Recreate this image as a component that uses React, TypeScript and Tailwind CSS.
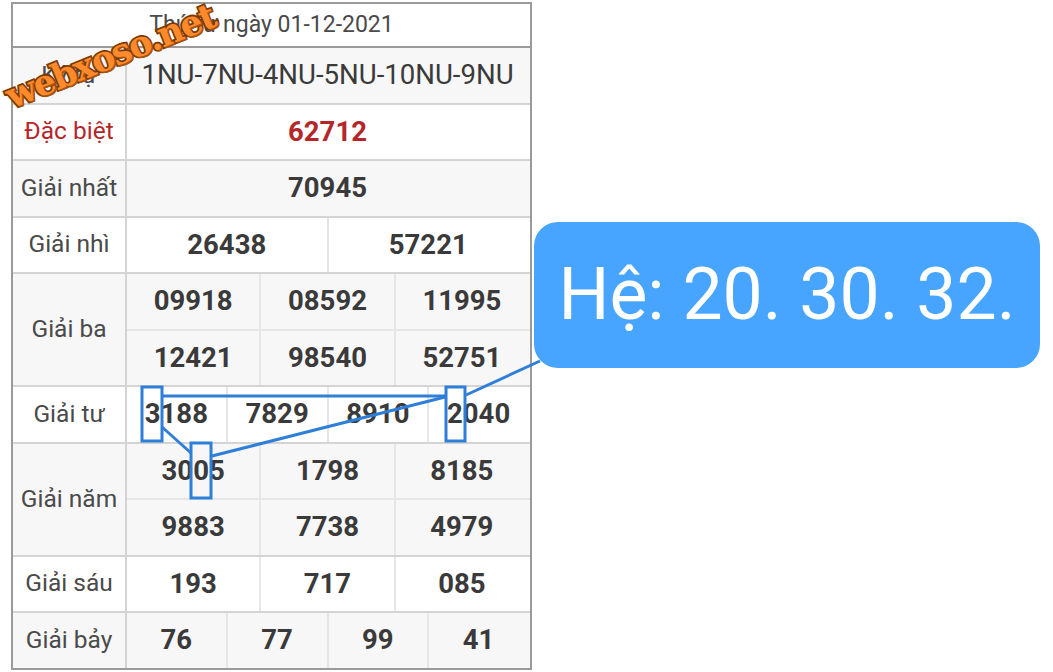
const font = "font-['Roboto',sans-serif]"

function Cells({ values, bold = true }: { values: string[]; bold?: boolean }) {
  return (
    <div className="flex flex-1 h-full pr-[2px]">
      {values.map((v, i) => (
        <div
          key={i}
          className={`flex-1 flex items-center justify-center pb-[1px] ${i > 0 ? "border-l-2 border-[#e6e6e6]" : ""} ${bold ? "font-bold text-[27.5px]" : "text-[27.6px]"}`}
        >
          {v}
        </div>
      ))}
    </div>
  )
}

function Label({ text, red }: { text: string; red?: boolean }) {
  return (
    <div className={`w-[114px] shrink-0 self-stretch flex items-center justify-center text-[24.5px] border-r-2 border-[#d4d4d4] ${red ? "text-[#b5262b]" : "text-[#4a4a4a]"}`}>
      {text}
    </div>
  )
}

function Row({ label, values, gray, red, bold }: { label: string; values: string[]; gray?: boolean; red?: boolean; bold?: boolean }) {
  return (
    <div className={`flex h-[56.5px] last:h-[54.5px] items-center border-b-2 border-[#d4d4d4] last:border-b-0 ${gray ? "bg-[#f7f7f7]" : "bg-white"}`}>
      <Label text={label} red={red} />
      <Cells values={values} bold={bold} />
    </div>
  )
}

function DoubleRow({ label, top, bottom, gray }: { label: string; top: string[]; bottom: string[]; gray?: boolean }) {
  return (
    <div className={`flex h-[113px] border-b-2 border-[#d4d4d4] ${gray ? "bg-[#f7f7f7]" : "bg-white"}`}>
      <Label text={label} />
      <div className="flex-1 flex flex-col">
        <div className="flex-1 border-b-2 border-[#e6e6e6]">
          <Cells values={top} />
        </div>
        <div className="flex-1">
          <Cells values={bottom} />
        </div>
      </div>
    </div>
  )
}

export default function App() {
  return (
    <div className={`${font} relative w-[1053px] h-[672px] bg-white overflow-hidden flex items-start text-[#3a3a3a]`}>
      <div className="ml-[11px] mt-[2px] w-[521px] border-2 border-[#9a9a9a]">
        <div className="h-[44px] flex items-center justify-center text-[23px] text-[#4a4a4a] border-b-2 border-[#9a9a9a]">
          Thứ tư ngày 01-12-2021
        </div>
        <Row label="Ký tự" values={["1NU-7NU-4NU-5NU-10NU-9NU"]} gray bold={false} />
        <div className="flex h-[56.5px] items-center border-b-2 border-[#d4d4d4] bg-white">
          <Label text="Đặc biệt" red />
          <div className="flex-1 pr-[2px] text-center font-bold text-[27.5px] text-[#b5262b]">62712</div>
        </div>
        <Row label="Giải nhất" values={["70945"]} gray />
        <Row label="Giải nhì" values={["26438", "57221"]} />
        <DoubleRow label="Giải ba" top={["09918", "08592", "11995"]} bottom={["12421", "98540", "52751"]} gray />
        <Row label="Giải tư" values={["3188", "7829", "8910", "2040"]} />
        <DoubleRow label="Giải năm" top={["3005", "1798", "8185"]} bottom={["9883", "7738", "4979"]} gray />
        <Row label="Giải sáu" values={["193", "717", "085"]} />
        <Row label="Giải bảy" values={["76", "77", "99", "41"]} gray />
      </div>

      {/* annotation lines over the table */}
      <svg className="absolute inset-0" width="1053" height="672" fill="none" stroke="#2f7fd9" strokeWidth="3">
        <rect x="142" y="387" width="20" height="54" />
        <rect x="191" y="443" width="20" height="55" />
        <rect x="446" y="387" width="19" height="54" />
        <path d="M163 396H445" />
        <path d="M212 456L445 397" />
        <path d="M162 427L191 453" />
        <path d="M466 395L540 361" />
      </svg>

      <div className="relative ml-[2px] mt-[222px] w-[506px] h-[146px] rounded-[24px] bg-[#47a4ff] text-white text-[71.5px] flex items-center justify-center whitespace-nowrap">
        Hệ: 20. 30. 32.
      </div>

      {/* watermark */}
      <div className="absolute left-[-1px] top-[38px] -rotate-[22deg] font-['DejaVu_Serif',serif] font-bold text-[35px] leading-none tracking-[-1.6px] text-[#ff8a2b] [-webkit-text-stroke:3.5px_#7a3a08] [paint-order:stroke_fill] [text-shadow:1px_2px_0_#a85508]">
        webxoso.net
      </div>
    </div>
  )
}
